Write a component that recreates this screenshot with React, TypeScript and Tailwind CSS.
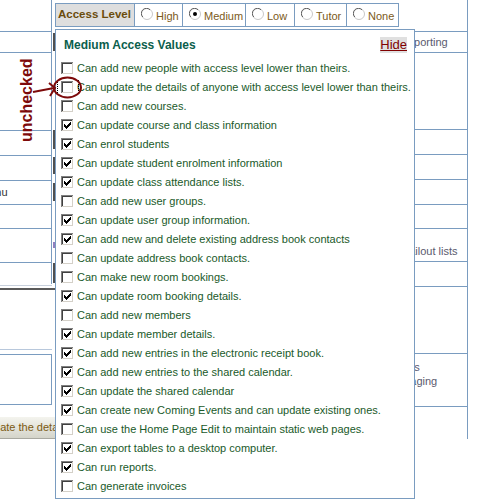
import React from "react";

const items: [string, boolean][] = [
  ["Can add new people with access level lower than theirs.", false],
  ["Can update the details of anyone with access level lower than theirs.", false],
  ["Can add new courses.", false],
  ["Can update course and class information", true],
  ["Can enrol students", true],
  ["Can update student enrolment information", true],
  ["Can update class attendance lists.", true],
  ["Can add new user groups.", false],
  ["Can update user group information.", true],
  ["Can add new and delete existing address book contacts", true],
  ["Can update address book contacts.", false],
  ["Can make new room bookings.", false],
  ["Can update room booking details.", true],
  ["Can add new members", false],
  ["Can update member details.", true],
  ["Can add new entries in the electronic receipt book.", true],
  ["Can add new entries to the shared calendar.", true],
  ["Can update the shared calendar", true],
  ["Can create new Coming Events and can update existing ones.", true],
  ["Can use the Home Page Edit to maintain static web pages.", false],
  ["Can export tables to a desktop computer.", true],
  ["Can run reports.", true],
  ["Can generate invoices", false],
];

const CheckBox = ({ checked }: { checked: boolean }) => (
  <svg width="13" height="13" viewBox="0 0 13 13" shapeRendering="crispEdges" className="block shrink-0">
    <rect x="0" y="0" width="13" height="13" fill="#fff" />
    <rect x="0" y="0" width="12" height="1" fill="#808080" />
    <rect x="0" y="0" width="1" height="12" fill="#808080" />
    <rect x="1" y="1" width="10" height="1" fill="#404040" />
    <rect x="1" y="1" width="1" height="10" fill="#404040" />
    <rect x="1" y="11" width="11" height="1" fill="#d4d0c8" />
    <rect x="11" y="1" width="1" height="11" fill="#d4d0c8" />
    {checked && (
      <g fill="#000">
        <rect x="9" y="3" width="1" height="1" />
        <rect x="8" y="4" width="2" height="1" />
        <rect x="3" y="5" width="1" height="1" />
        <rect x="7" y="5" width="3" height="1" />
        <rect x="3" y="6" width="2" height="1" />
        <rect x="6" y="6" width="3" height="1" />
        <rect x="3" y="7" width="5" height="1" />
        <rect x="4" y="8" width="3" height="1" />
        <rect x="5" y="9" width="1" height="1" />
      </g>
    )}
  </svg>
);

const Radio = ({ on }: { on?: boolean }) => (
  <svg width="12" height="12" viewBox="0 0 12 12" className="block shrink-0">
    <circle cx="6" cy="6" r="5.5" fill="#fff" stroke="#c8c8c8" />
    <path d="M1.8 9 A5 5 0 0 1 9 1.8" fill="none" stroke="#606060" />
    {on && <circle cx="6" cy="6" r="2" fill="#000" />}
  </svg>
);

const RadioCell = ({ label, w, on }: { label: string; w: string; on?: boolean }) => (
  <div className={`${w} flex items-start pl-[6px] border-r border-[#7a9cc0]`}>
    <div className="mt-[4px]">
      <Radio on={on} />
    </div>
    <span className="ml-[3px] pt-[1px] leading-[22px] text-[11px] text-[#7b5a1a]">{label}</span>
  </div>
);

const Bar = ({ mt, h }: { mt: string; h: string }) => (
  <div className={`${mt} ${h} ml-[1px] w-[2px] bg-[#505050]`} />
);

export default function App() {
  return (
    <div className="relative w-[485px] h-[503px] overflow-hidden bg-white font-['Liberation_Sans',Arial,sans-serif]">
      <div className="flex">
        {/* left column */}
        <div className="w-[52px] shrink-0 flex flex-col">
          <div className="flex flex-col border-r border-[#7a9cc0]">
            <div className="h-[32px] border-b border-[#7a9cc0]" />
            <div className="h-[21px] border-b border-[#7a9cc0]" />
            <div className="h-[78px] border-b border-[#7a9cc0]" />
            <div className="h-[25px] border-b border-[#7a9cc0]" />
            <div className="h-[25px] border-b border-[#7a9cc0]" />
            <div className="h-[24px] border-b border-[#7a9cc0] flex items-center overflow-hidden text-[11px] text-[#333] whitespace-nowrap">
              <span className="ml-[-20px]">Menu</span>
            </div>
            <div className="h-[24px] border-b border-[#7a9cc0]" />
            <div className="h-[34px] border-b border-[#7a9cc0]" />
            <div className="h-[21px]" />
          </div>
          <div className="mt-[1px] h-[1px] bg-[#c8d0dc]" />
          <div className="mt-[2px] h-[2px] bg-[#5a5a5a]" />
          <div className="mt-[59px] h-[1px] bg-[#b8c8dc]" />
          <div className="mt-[4px] h-[51px] border-y border-r border-[#7a9cc0]" />
          <div className="mt-[12px] h-[22px] w-[56px] overflow-hidden bg-gradient-to-b from-[#f4f4ee] to-[#d4d4ca] border-b border-[#a8a8a0] text-[11px] leading-[21px] text-[#7b5a12] whitespace-nowrap">
            <span className="ml-[-20px]">Update the details</span>
          </div>
        </div>

        {/* middle column */}
        <div className="w-[362px] shrink-0 flex flex-col">
          <div className="mt-[3px] ml-[3px] w-[344px] h-[24px] flex border-y border-l border-[#7a9cc0]">
            <div className="w-[79px] border-r border-[#7a9cc0] bg-[#dedede] pl-[2px] text-[11.5px] font-bold leading-[20px] text-[#6b4c0c]">
              Access Level
            </div>
            <RadioCell label="High" w="w-[48px]" />
            <RadioCell label="Medium" w="w-[63px]" on />
            <RadioCell label="Low" w="w-[49px]" />
            <RadioCell label="Tutor" w="w-[52px]" />
            <RadioCell label="None" w="w-[52px]" />
          </div>
          <Bar mt="mt-[6px]" h="h-[18px]" />
          <Bar mt="mt-[79px]" h="h-[19px]" />
          <Bar mt="mt-[8px]" h="h-[17px]" />
          <Bar mt="mt-[9px]" h="h-[18px]" />
          <div className="mt-[41px] h-[6px] ml-[1px] w-[2px] bg-[#9080c0]" />
          <Bar mt="mt-[15px]" h="h-[20px]" />
          <div className="mt-[5px] h-[2px] bg-[#5a5a5a]" />
        </div>

        {/* right column */}
        <div className="w-[54px] shrink-0 flex flex-col border-r border-[#7a9cc0] text-[11px] text-[#5a5a6e] whitespace-nowrap">
          <div className="h-[32px] border-b border-[#7a9cc0]" />
          <div className="h-[21px] border-b border-[#7a9cc0] flex items-center overflow-hidden">
            <span className="ml-[-14px]">Reporting</span>
          </div>
          <div className="h-[77px] border-b border-[#7a9cc0]" />
          <div className="h-[25px] border-b border-[#7a9cc0]" />
          <div className="h-[25px] border-b border-[#7a9cc0]" />
          <div className="h-[25px] border-b border-[#7a9cc0]" />
          <div className="h-[24px] border-b border-[#7a9cc0]" />
          <div className="h-[33px] border-b border-[#7a9cc0] flex items-end pb-[2px] overflow-hidden">
            <span className="ml-[-14px]">Mailout lists</span>
          </div>
          <div className="h-[25px] border-b border-[#7a9cc0]" />
          <div className="h-[67px] border-b border-[#7a9cc0]" />
          <div className="h-[53px] border-b border-[#7a9cc0] pt-[6px] leading-[14px] overflow-hidden">
            <div className="ml-[-20px]">Tools</div>
            <div className="ml-[-30px]">Messaging</div>
          </div>
        </div>
      </div>

      {/* popup */}
      <div className="absolute left-[55px] top-[29px] w-[360px] h-[470px] border border-[#7a9cc0] bg-white">
        <div className="flex items-start justify-between pl-[8px] pr-[7px] pt-[7px]">
          <span className="mt-[1px] text-[12px] font-bold leading-[14px] text-[#0b5e4c]">Medium Access Values</span>
          <span className="bg-[#e0e0e0] text-[13px] leading-[16px] text-[#800000] underline">Hide</span>
        </div>
        <div className="mt-[6px] pl-[5px] flex flex-col">
          {items.map(([label, checked]) => (
            <div key={label} className="h-[19px] flex items-start">
              <div className="mt-[3px]">
                <CheckBox checked={checked} />
              </div>
              <span className="ml-[3px] leading-[19px] text-[11px] text-[#1a5a2a] whitespace-nowrap">{label}</span>
            </div>
          ))}
        </div>
      </div>

      {/* annotation */}
      <svg className="absolute left-0 top-0 pointer-events-none" width="485" height="503">
        <text
          transform="translate(32 142) rotate(-90)"
          fontFamily="'Liberation Sans', Arial, sans-serif"
          fontWeight="700"
          fontSize="16"
          fill="#7d0a0a"
        >
          unchecked
        </text>
        <line x1="57.5" y1="80" x2="57.5" y2="93" stroke="#000" strokeDasharray="1 1" />
        <line x1="78.5" y1="80" x2="78.5" y2="93" stroke="#000" strokeDasharray="1 1" />
        <ellipse cx="67.5" cy="87.5" rx="13.5" ry="10" fill="none" stroke="#7d0a0a" strokeWidth="2" />
        <path d="M33 92 L54 88" stroke="#7d0a0a" strokeWidth="2" fill="none" />
        <path d="M49 83 L55 88 L50 96" stroke="#7d0a0a" strokeWidth="2" fill="none" />
      </svg>
    </div>
  );
}
